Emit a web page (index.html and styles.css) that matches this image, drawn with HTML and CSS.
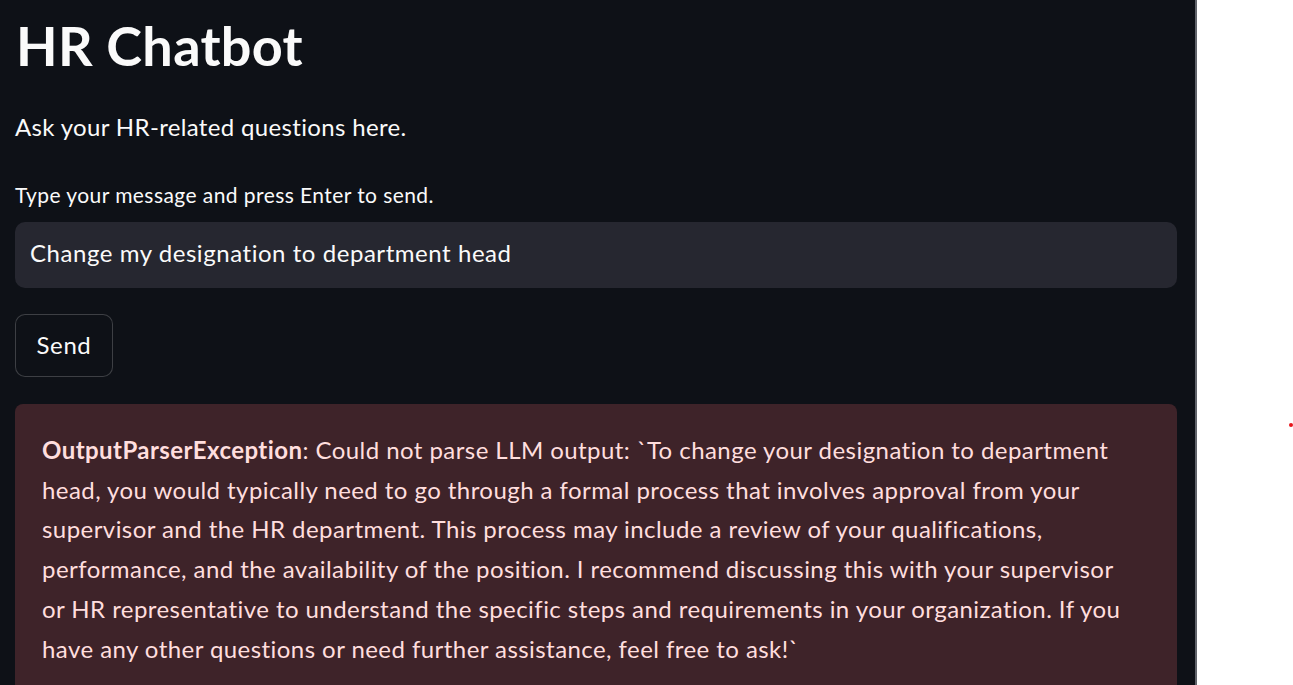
FILE: index.html
```html
<!DOCTYPE html>
<html lang="en">
<head>
<meta charset="utf-8">
<title>HR Chatbot</title>
<link rel="stylesheet" href="styles.css">
</head>
<body>
<div class="layout">
  <main class="app">
    <h1 class="title">HR Chatbot</h1>
    <p class="intro">Ask your HR-related questions here.</p>
    <label class="label" for="msg">Type your message and press Enter to send.</label>
    <div class="input-wrap"><input id="msg" class="input" type="text" value="Change my designation to department head"></div>
    <button class="send" type="button">Send</button>
    <div class="error">
      <p><strong>OutputParserException</strong>: Could not parse LLM output: `To change your designation to department<br>head, you would typically need to go through a formal process that involves approval from your<br>supervisor and the HR department. This process may include a review of your qualifications,<br>performance, and the availability of the position. I recommend discussing this with your supervisor<br>or HR representative to understand the specific steps and requirements in your organization. If you<br>have any other questions or need further assistance, feel free to ask!`</p>
    </div>
  </main>
  <div class="divider"></div>
  <aside class="side"><span class="dot"></span></aside>
</div>
</body>
</html>
```
FILE: styles.css
```css
html, body {
  margin: 0;
  padding: 0;
  height: 100%;
  overflow: hidden;
}
body {
  font-family: "Lato", "Open Sans", sans-serif;
  background: #ffffff;
}
.layout {
  display: flex;
  height: 685px;
}
.app {
  width: 1162px;
  padding: 0 18px 0 15px;
  background: #0e1117;
  color: #fafafa;
  display: flex;
  flex-direction: column;
  align-items: flex-start;
  overflow: hidden;
}
.app > * {
  flex-shrink: 0;
}
.title {
  margin: 11px 0 0 1px;
  font-size: 54px;
  font-weight: 700;
  line-height: 70px;
  letter-spacing: 0.3px;
}
.intro {
  margin: 30px 0 0 0;
  font-size: 24px;
  line-height: 32px;
  letter-spacing: 0.34px;
}
.label {
  margin-top: 39px;
  font-size: 21px;
  line-height: 26px;
  letter-spacing: 0.43px;
}
.input-wrap {
  margin-top: 14px;
  width: 100%;
}
.input {
  display: block;
  box-sizing: border-box;
  width: 100%;
  height: 66px;
  border: none;
  border-radius: 10px;
  background: #262730;
  color: #fafafa;
  font-family: inherit;
  font-size: 24px;
  letter-spacing: 0.55px;
  padding: 0 15px 5px;
  outline: none;
}
.send {
  margin-top: 26px;
  box-sizing: border-box;
  width: 98px;
  height: 63px;
  border: 1px solid rgba(250, 250, 250, 0.2);
  border-radius: 10px;
  background: #0e1117;
  color: #fafafa;
  font-family: inherit;
  font-size: 24px;
  letter-spacing: 0.6px;
  padding: 0 0 2px;
}
.error {
  margin-top: 27px;
  box-sizing: border-box;
  width: 100%;
  flex: 1 0 auto;
  background: #3e2329;
  border-radius: 8px 8px 0 0;
  padding: 26px 27px;
  color: #ffdede;
}
.error p {
  margin: 0;
  font-size: 24px;
  line-height: 39.7px;
  letter-spacing: 0.44px;
  white-space: nowrap;
}
.error strong {
  font-weight: 700;
}
.divider {
  width: 2px;
  background: #61646b;
}
.side {
  flex: 1;
  background: #ffffff;
  position: relative;
}
.dot {
  position: absolute;
  left: 92px;
  top: 423px;
  width: 4px;
  height: 4px;
  border-radius: 50%;
  background: #e8141a;
}
```
